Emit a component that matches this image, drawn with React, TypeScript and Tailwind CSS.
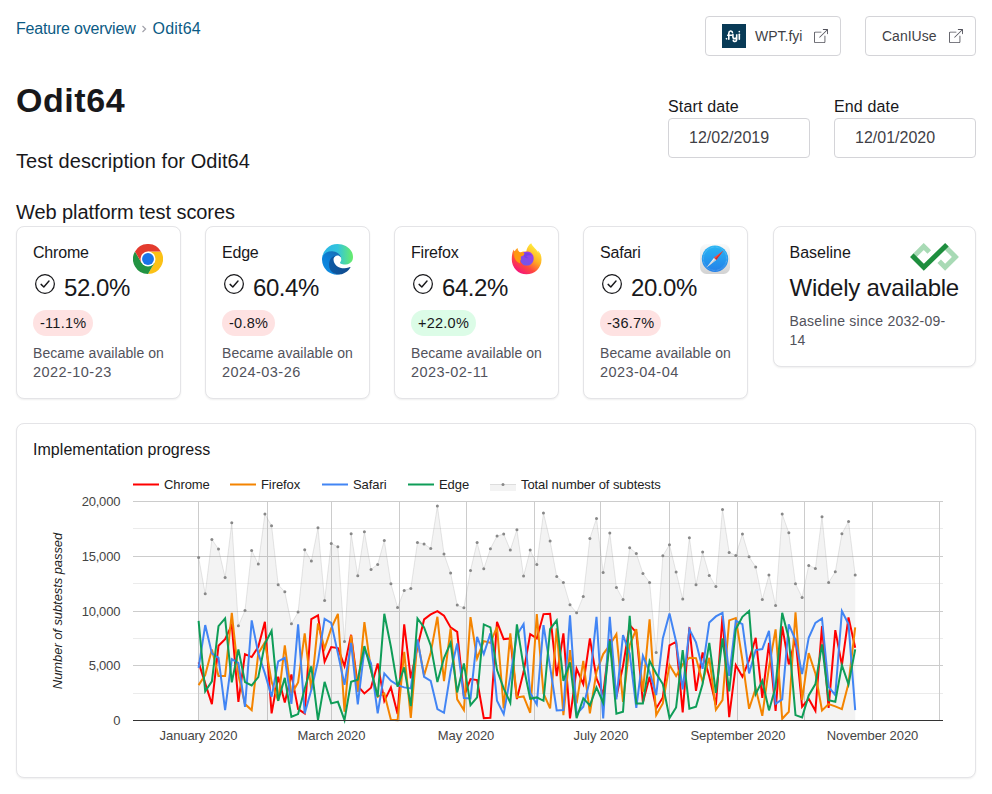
import React from "react";

const TOTAL = [202,311,148,177,262,98,407,361,181,222,72,107,284,305,401,366,179,213,113,331,160,170,454,131,257,125,238,223,151,281,352,301,295,157,162,175,48,192,249,345,353,241,157,236,176,138,132,180,119,258,180,223,69,153,259,277,344,368,319,145,85,247,129,292,328,173,190,250,277,487,197,164,246,327,143,284,186,256,289,58,187,196,132,200,231,328,255,346,72,128,281,322,226,235,80,277,245,131,94,255];
const EDGE = [392,604,574,408,385,577,478,576,586,561,461,422,632,563,680,672,596,529,690,575,640,635,690,575,569,468,540,620,371,470,590,532,648,385,412,466,576,504,458,607,520,645,622,403,412,540,595,638,403,530,626,622,632,417,391,572,517,684,625,646,592,638,452,671,665,377,640,640,512,550,582,684,652,480,656,650,582,458,608,445,604,418,380,363,612,572,661,590,368,445,675,682,616,582,463,630,635,525,583,478];
const CHROME = [517,580,642,467,447,405,635,492,501,470,395,670,560,637,553,657,670,387,376,515,471,474,528,434,588,610,593,520,633,592,672,403,565,470,388,373,363,377,412,425,618,567,570,684,683,395,447,445,627,545,432,445,372,371,558,430,685,536,582,445,565,612,447,620,528,405,427,637,560,655,622,466,455,667,412,602,487,560,645,378,681,525,560,510,443,623,458,662,409,523,445,650,626,662,408,653,420,525,382,473];
const FIREFOX = [585,555,478,558,558,368,555,642,660,490,457,575,632,466,612,577,430,600,400,475,415,371,665,436,605,396,540,620,610,689,690,485,683,450,556,488,380,573,415,628,660,381,505,453,458,410,655,430,622,619,668,372,610,655,415,675,480,640,512,670,545,492,465,432,635,465,417,605,388,675,640,525,558,523,503,504,575,503,659,630,391,384,510,656,595,677,530,418,686,665,367,630,489,550,661,642,649,657,580,412];
const SAFARI = [533,405,490,503,660,507,518,650,391,490,550,620,514,503,641,403,670,600,513,386,398,490,584,458,643,478,520,670,550,572,585,592,595,448,560,572,657,668,545,460,624,625,440,492,430,632,672,560,435,402,608,643,405,530,661,660,376,672,650,570,380,685,380,628,435,490,653,497,545,615,445,370,455,598,418,457,536,397,379,368,557,392,402,550,480,477,422,641,628,403,450,552,443,398,385,590,615,363,402,660];

const px = (i: number) => 198.6 + i * 6.632;
const py = (v: number) => 490.1 + v / 3;
const pts = (d: number[]) => d.map((v, i) => `${px(i).toFixed(1)},${py(v).toFixed(1)}`).join(" ");

const SERIES: [string, number[]][] = [
  ["#ff0000", CHROME],
  ["#f48400", FIREFOX],
  ["#4285f4", SAFARI],
  ["#0f9d58", EDGE],
];
const LEGEND: [string, string, number][] = [
  ["Chrome", "#ff0000", 133],
  ["Firefox", "#f48400", 230],
  ["Safari", "#4285f4", 322],
  ["Edge", "#0f9d58", 408],
];
const MONTHS = [198, 267, 331, 399, 466, 534, 600, 669, 737, 804, 872, 939];
const MONTH_LABELS: [string, number][] = [
  ["January 2020", 198.5], ["March 2020", 331.5], ["May 2020", 466], ["July 2020", 601], ["September 2020", 738], ["November 2020", 872.5],
];
const Y_LABELS: [string, number][] = [["20,000", 501], ["15,000", 556], ["10,000", 611], ["5,000", 665], ["0", 720]];

function Chart() {
  return (
    <svg width="926" height="290" viewBox="33 470 926 290" className="block" fontFamily="'Liberation Sans', Arial, sans-serif" fontSize="13" letterSpacing="-0.08">
      {LEGEND.map(([name, color, x]) => (
        <g key={name}>
          <rect x={x} y="483.5" width="26" height="2" fill={color} />
          <text x={x + 31} y="489" fill="#222222">{name}</text>
        </g>
      ))}
      <rect x="490" y="484" width="26" height="7" fill="#f3f3f3" />
      <rect x="490" y="484" width="26" height="1" fill="#dddddd" />
      <circle cx="503" cy="484.5" r="1.5" fill="#888888" />
      <text x="521" y="489" fill="#222222">Total number of subtests</text>

      {[528, 583, 638, 693].map((y) => <rect key={y} x="133" y={y} width="810" height="1" fill="#ebebeb" />)}
      {[501, 556, 611, 665].map((y) => <rect key={y} x="133" y={y} width="810" height="1" fill="#cccccc" />)}
      {MONTHS.map((x) => <rect key={x} x={x} y="501" width="1" height="219" fill="#cccccc" />)}
      <polygon points={`198.6,720 ${pts(TOTAL)} 855.2,720`} fill="#888888" fillOpacity="0.1" />
      <polyline points={pts(TOTAL)} fill="none" stroke="#888888" strokeOpacity="0.2" />
      {SERIES.map(([color, d]) => <polyline key={color} points={pts(d)} fill="none" stroke={color} strokeWidth="2" />)}
      <rect x="133" y="720" width="810" height="1" fill="#333333" />
      {TOTAL.map((v, i) => <circle key={i} cx={px(i)} cy={py(v)} r="1.5" fill="#888888" />)}

      {Y_LABELS.map(([t, y]) => <text key={t} x="120.2" y={y + 5} textAnchor="end" fill="#444444" letterSpacing="-0.2">{t}</text>)}
      {MONTH_LABELS.map(([t, x]) => <text key={t} x={x} y="740" textAnchor="middle" fill="#444444">{t}</text>)}
      <text transform="translate(62 611) rotate(-90)" textAnchor="middle" fontStyle="italic" fill="#222222">Number of subtests passed</text>
    </svg>
  );
}

function ExternalIcon() {
  return (
    <svg width="14" height="14" viewBox="0 0 16 16" fill="#52525b">
      <path fillRule="evenodd" d="M8.636 3.5a.5.5 0 0 0-.5-.5H1.5A1.5 1.5 0 0 0 0 4.5v10A1.5 1.5 0 0 0 1.5 16h10a1.5 1.5 0 0 0 1.5-1.5V7.864a.5.5 0 0 0-1 0V14.5a.5.5 0 0 1-.5.5h-10a.5.5 0 0 1-.5-.5v-10a.5.5 0 0 1 .5-.5h6.636a.5.5 0 0 0 .5-.5z" />
      <path fillRule="evenodd" d="M16 .5a.5.5 0 0 0-.5-.5h-5a.5.5 0 0 0 0 1h3.793L6.146 9.146a.5.5 0 1 0 .708.708L15 1.707V5.5a.5.5 0 0 0 1 0v-5z" />
    </svg>
  );
}

function CheckIcon() {
  return (
    <svg width="20" height="20" viewBox="0 0 16 16" fill="none" stroke="#18181b">
      <circle cx="8" cy="8" r="7.5" />
      <path d="M4.900 8.300 7.050 10.350 11.200 5.600" strokeWidth="1.150" strokeLinecap="round" strokeLinejoin="round" />
    </svg>
  );
}

function FyiLogo() {
  return (
    <svg width="24" height="24" viewBox="0 0 24 24">
      <rect width="24" height="24" fill="#083a56" />
      <g fill="none" stroke="#ffffff" strokeWidth="1.6" strokeLinecap="round">
        <circle cx="4.3" cy="14.8" r=".4" strokeWidth="1" />
        <path d="M6.8 15.3V9.2c0-2.800 3.400-2.900 3.600-.7M5.7 11.300h4" />
        <path d="M10.9 10.2v2.6c0 2.4 3.800 2.4 3.800 0v-2.6 5.3c0 2.500-3.200 2.500-3.400.8" />
        <path d="M17.3 10.3v5" /><path d="M17.3 7.6v.1" />
      </g>
    </svg>
  );
}

function ChromeLogo() {
  return (
    <svg width="30" height="30" viewBox="0 0 48 48">
      <path d="M24 12h20.8A24 24 0 0 1 24 48l10.4-18z" fill="#fbc116" />
      <path d="M3.2 12A24 24 0 0 0 24 48l10.4-18L24 24 13.6 30z" fill="#229342" />
      <path d="M3.2 12A24 24 0 0 1 44.8 12H24L13.6 30z" fill="#e33b2e" />
      <circle cx="24" cy="24" r="12" fill="#fff" />
      <circle cx="24" cy="24" r="9.5" fill="#1a73e8" />
    </svg>
  );
}

function EdgeLogo() {
  return (
    <svg width="31" height="31" viewBox="0 0 256 256">
      <defs>
        <linearGradient id="e1" x1="60" y1="177" x2="240" y2="177" gradientUnits="userSpaceOnUse"><stop stopColor="#0c59a4" /><stop offset="1" stopColor="#114a8b" /></linearGradient>
        <linearGradient id="e2" x1="150" y1="100" x2="45" y2="230" gradientUnits="userSpaceOnUse"><stop stopColor="#1670b8" /><stop offset=".5" stopColor="#0b7fd8" /><stop offset="1" stopColor="#0f8be0" /></linearGradient>
        <linearGradient id="e3" x1="10" y1="90" x2="250" y2="90" gradientUnits="userSpaceOnUse"><stop stopColor="#2bb6e8" /><stop offset=".5" stopColor="#33c4dc" /><stop offset="1" stopColor="#66eb6e" /></linearGradient>
      </defs>
      <path fill="url(#e2)" d="M106 241a79 79 0 0 1-23-21 81 81 0 0 1 29-120c3-2 9-5 16-5 10 0 20 5 26 13 4 5 6 11 6 18 0 0 25-80-80-80C36 46 0 88 0 125a130 130 0 0 0 12 56 128 128 0 0 0 156 67c-21 6-43 4-62-7z" />
      <path fill="url(#e1)" d="M231 190c-4 2-7 3-11 5a102 102 0 0 1-36 6c-47 0-89-32-89-74 0-11 7-22 17-28-43 2-54 46-54 72 0 74 68 81 82 81 8 0 20-2 27-4l2-1a128 128 0 0 0 66-53c2-3-1-5-4-4z" />
      <path fill="url(#e3)" d="M152 149c-1 1-3 2-3 5 0 3 2 5 4 7 14 10 42 8 42 8a60 60 0 0 0 31-8 61 61 0 0 0 30-53c0-22-8-37-11-43C224 23 177 0 128 0A128 128 0 0 0 0 126c0-37 37-66 80-66 4 0 24 0 42 10 16 8 24 19 30 29 6 11 7 24 7 29s-2 13-7 21z" />
    </svg>
  );
}

function FirefoxLogo() {
  return (
    <svg width="31" height="32" viewBox="0 0 31 32">
      <defs>
        <linearGradient id="f1" x1="25" y1="3" x2="7" y2="29" gradientUnits="userSpaceOnUse"><stop stopColor="#fff03f" /><stop offset=".4" stopColor="#ffae22" /><stop offset=".7" stopColor="#ff4a3d" /><stop offset="1" stopColor="#f5157a" /></linearGradient>
        <linearGradient id="f2" x1="19" y1="9" x2="11" y2="23" gradientUnits="userSpaceOnUse"><stop stopColor="#a13be8" /><stop offset="1" stopColor="#6a5bea" /></linearGradient>
      </defs>
      <path fill="url(#f1)" d="M29.6 11.3c-.7-1.6-2-3.3-3.1-3.9.5 1 .8 1.9 1 2.800C25.700 6 21.900 4.500 20.200 .3c-2.900 1.800-4.600 5.100-4.900 8.300-2.100-.4-4.700-.1-6 1C8 8.900 6.900 7.500 6.600 5c-1.400.8-2.300 2.200-2.900 3.400-.4-.3-.7-.9-.7-2C1.500 8 .8 11.500.8 16.500A14.700 14.700 0 0 0 15.400 31.300C23.700 31.300 30.300 25 30.500 17c.1-2-.2-4-.9-5.700z" />
      <path fill="url(#f2)" d="M21.500 11.500c-1.600-3-5-3.600-8.200-2.400-2.400 1-4.300 3.500-4.300 6.300 0 4 3 7.200 6.700 7.200 4.500 0 7.400-3.800 6.900-8.200-.1-1-.5-2.200-1.100-2.900z" />
      <path fill="#ff980e" d="M3.200 8.300c3-.8 5 .4 6 1.300 1.200-.2 3.700.2 4.500.9-.5 2-2.700 2.600-3.900 3.100l.2 2.800c-1.200.9-1.400 2.500-.5 4.200-3-.7-6.300-4-6.300-8z" />
      <path fill="#7542e5" d="M13.500 10.200c3-1 6 .2 7.300 2.400-2.300-.6-4.200-.2-5.800.7 1 .6 1.600 1.400 2.500 1.700-2.500.7-4.500-.6-4.500-2.500z" />
    </svg>
  );
}

function SafariLogo() {
  return (
    <svg width="32" height="32" viewBox="0 0 32 32">
      <defs>
        <linearGradient id="s0" x1="0" y1="0" x2="0" y2="1"><stop stopColor="#fafafa" /><stop offset="1" stopColor="#d2d2d2" /></linearGradient>
        <linearGradient id="s1" x1="0" y1="0" x2="0" y2="1"><stop stopColor="#27b5f4" /><stop offset="1" stopColor="#2480e8" /></linearGradient>
      </defs>
      <rect x="1" y="1" width="30" height="30" rx="6.500" fill="url(#s0)" />
      <circle cx="16" cy="15.700" r="13.200" fill="url(#s1)" />
      <circle cx="16" cy="15.700" r="11.700" fill="none" stroke="#fff" strokeOpacity=".3" strokeWidth="1.200" strokeDasharray=".5 .8" />
      <path d="M24.500 7.500 14.900 14.600 17.100 17.100z" fill="#ff4a3a" />
      <path d="M7.500 24.500 14.900 14.900 17.100 17.100z" fill="#f2f2f2" />
      <path d="m24.500 7.500-7.400 9.600L16 16z" fill="#c72e2b" />
      <path d="M7.500 24.500 17.100 17.100 16 16z" fill="#c6cbd0" />
    </svg>
  );
}

function BaselineLogo() {
  return (
    <svg width="49" height="28" viewBox="0 0 49 28" fill="none" strokeWidth="5">
      <path d="M4 13.200 13.700 3.500 19.300 9.100" stroke="#a8dab5" />
      <path d="M35 3.500 45.400 13.900 35.100 24.200 29.200 18.300" stroke="#a8dab5" />
      <path d="M1.800 12.200 13.800 24.200 36.900 1.800" stroke="#1e8e3e" />
    </svg>
  );
}

const CARD = "box-border rounded-lg border border-[#e4e4e7] bg-white shadow-[0_1px_2px_rgba(24,24,27,0.07)]";

interface BrowserProps {
  name: string;
  score: string;
  change: string;
  date: string;
  up?: boolean;
  logo: React.ReactNode;
}

function BrowserCard({ name, score, change, date, up, logo }: BrowserProps) {
  return (
    <section className={`${CARD} h-[173px] w-[165.250px] shrink-0 px-4 pt-4`}>
      <div className="flex h-[29px] justify-between">
        <span className="text-[16px] leading-5 tracking-[-0.200px]">{name}</span>
        <span className="flex h-8 w-8 items-center justify-center">{logo}</span>
      </div>
      <div className="flex h-8 items-center">
        <span className="-mt-[8px] ml-[2px]"><CheckIcon /></span>
        <span className="ml-[9px] text-[24px] leading-8 tracking-[-0.450px]">{score}</span>
      </div>
      <div className="mt-[6px] flex">
        <span className={`${up ? "bg-[#dcfce7]" : "bg-[#fee2e2]"} h-[26px] rounded-full px-[7px] text-[14.500px] leading-[26px] tracking-[0.250px]`}>{change}</span>
      </div>
      <p className="mt-2 whitespace-nowrap text-[14px] leading-[19px] tracking-[0.050px] text-[#52525b]">
        Became available on<br /><span className="text-[14.500px] tracking-[0.450px]">{date}</span>
      </p>
    </section>
  );
}

export default function App() {
  return (
    <main className="h-[794px] w-[992px] overflow-hidden bg-white px-4 pt-4 font-['Liberation_Sans',Arial,sans-serif] text-[#18181b]">
      <div className="flex h-10 justify-between">
        <nav className="flex h-[26px] items-center text-[16px] text-[#0c5b85]">
          <a className="tracking-[-0.200px]">Feature overview</a>
          <svg className="mr-[5px] ml-[5px]" width="7" height="10" viewBox="0 0 7 10"><path d="M1.500 2 4.600 5 1.500 8" fill="none" stroke="#a1a1aa" strokeWidth="1.200" /></svg>
          <a className="tracking-[0.200px]">Odit64</a>
        </nav>
        <div className="flex gap-6 text-[14px] text-[#3f3f46]">
          <a className="flex h-10 w-[136px] items-center rounded border border-[#d4d4d8] pl-4">
            <FyiLogo /><span className="mr-[11px] ml-[9px] w-12 whitespace-nowrap">WPT.fyi</span><ExternalIcon />
          </a>
          <a className="flex h-10 w-[111px] items-center rounded border border-[#d4d4d8] pl-4">
            <span className="mr-[11px] w-[56px] whitespace-nowrap">CanIUse</span><ExternalIcon />
          </a>
        </div>
      </div>

      <div className="flex h-[145px] justify-between">
        <div>
          <h1 className="mt-[22px] text-[34px] leading-[44px] font-bold tracking-[0.550px]">Odit64</h1>
          <p className="mt-[27px] text-[20px] leading-6 tracking-[0.060px]">Test description for Odit64</p>
        </div>
        <div className="flex gap-6 pt-10">
          {[["Start date", "12/02/2019"], ["End date", "12/01/2020"]].map(([label, value]) => (
            <label key={label} className="w-[142px] text-[16px] leading-[22px] tracking-[0.150px]">
              {label}
              <span className="flex h-10 items-center rounded border border-[#d4d4d8] px-5 text-[16px] tracking-normal text-[#3f3f46]">{value}</span>
            </label>
          ))}
        </div>
      </div>

      <h2 className="h-[25px] text-[20px] leading-[23px] tracking-[-0.080px]">Web platform test scores</h2>
      <div className="flex h-[197px] items-start gap-[23.750px]">
        <BrowserCard name="Chrome" score="52.0%" change="-11.1%" date="2022-10-23" logo={<ChromeLogo />} />
        <BrowserCard name="Edge" score="60.4%" change="-0.8%" date="2024-03-26" logo={<EdgeLogo />} />
        <BrowserCard name="Firefox" score="64.2%" change="+22.0%" date="2023-02-11" up logo={<FirefoxLogo />} />
        <BrowserCard name="Safari" score="20.0%" change="-36.7%" date="2023-04-04" logo={<SafariLogo />} />
        <section className={`${CARD} ml-[0.500px] h-[141px] min-w-0 grow px-4 pt-4`}>
          <div className="flex h-[29px] justify-between">
            <span className="text-[16px] leading-5">Baseline</span><BaselineLogo />
          </div>
          <div className="text-[24px] leading-8 tracking-[-0.250px] whitespace-nowrap">Widely available</div>
          <p className="mt-2 text-[14px] leading-[19px] tracking-[0.250px] text-[#52525b]">Baseline since 2032-09-<br />14</p>
        </section>
      </div>

      <section className={`${CARD} h-[355px] px-4 pt-4`}>
        <h3 className="h-[30px] text-[16px] leading-5 tracking-[0.050px]">Implementation progress</h3>
        <Chart />
      </section>
    </main>
  );
}
